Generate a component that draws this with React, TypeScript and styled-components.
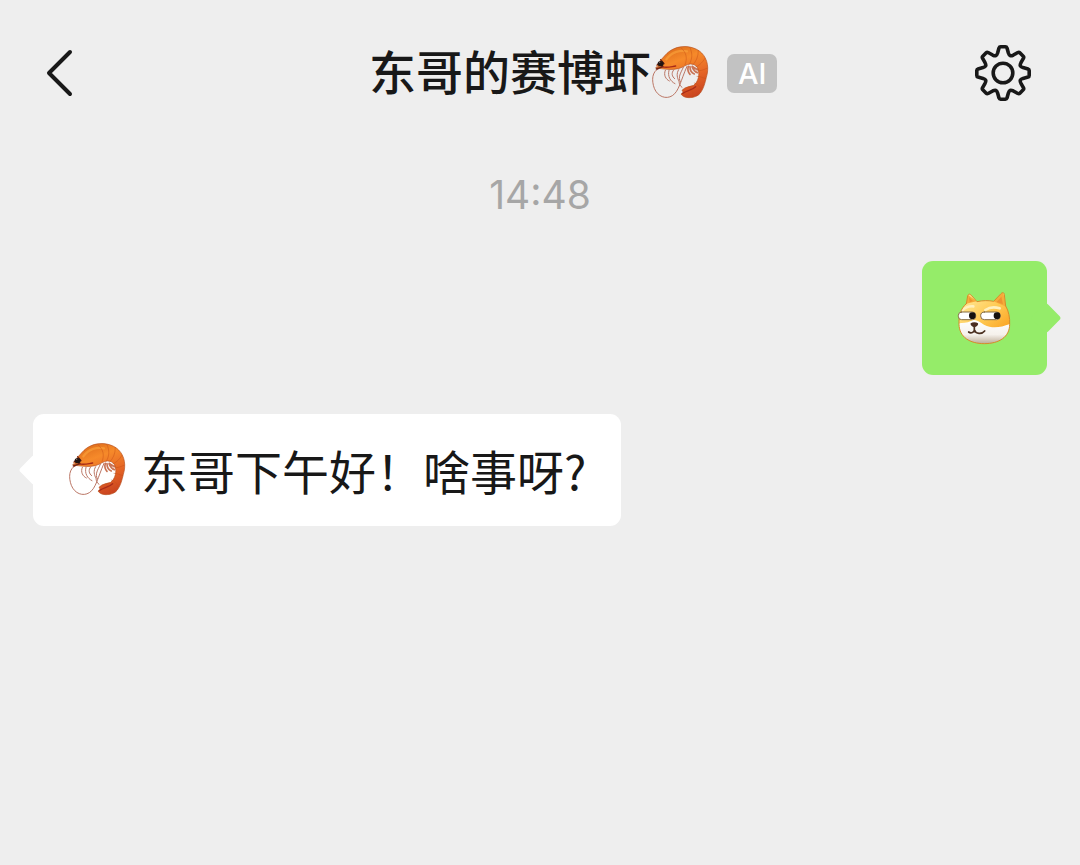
import React from "react";
import styled, { createGlobalStyle } from "styled-components";

const GlobalStyle = createGlobalStyle`
  * { box-sizing: border-box; }
  body {
    margin: 0;
    background: #eeeeee;
    color: #181818;
    font-family: Inter, "Noto Sans CJK SC", sans-serif;
  }
`;

const Page = styled.div`
  min-height: 100vh;
  background: #eeeeee;
`;

const Header = styled.header`
  display: grid;
  grid-template-columns: 1fr auto 1fr;
  align-items: center;
  height: 146px;
  padding: 0 48px 0 46px;
`;

const IconButton = styled.button`
  display: flex;
  padding: 0;
  border: 0;
  background: none;
  color: #181818;
  cursor: pointer;
`;

const Title = styled.h1`
  display: flex;
  align-items: center;
  margin: 0;
  font-size: 47px;
  line-height: 64px;
  font-weight: 500;
  white-space: nowrap;
`;

const HeaderEnd = styled.div`
  display: flex;
  align-items: center;
  justify-content: space-between;
  padding-left: 18px;
`;

const Badge = styled.span`
  padding: 0 11px;
  border-radius: 7px;
  background: #c2c2c2;
  color: #ffffff;
  font-size: 29px;
  line-height: 39px;
  font-weight: 500;
`;

const Conversation = styled.main`
  padding: 25px 33px;
`;

const Time = styled.time`
  display: block;
  margin-bottom: 42px;
  color: #a6a6a6;
  font-size: 39px;
  line-height: 48px;
  text-align: center;
`;

const MessageList = styled.ol`
  display: flex;
  flex-direction: column;
  gap: 39px;
  margin: 0;
  padding: 0;
  list-style: none;
`;

const Bubble = styled.li<{ $own?: boolean }>`
  position: relative;
  display: flex;
  align-items: center;
  gap: 15px;
  align-self: ${(p) => (p.$own ? "flex-end" : "flex-start")};
  min-height: ${(p) => (p.$own ? 114 : 112)}px;
  padding: 0 35px;
  border-radius: 11px;
  background: ${(p) => (p.$own ? "#95ec69" : "#ffffff")};
  font-family: "Noto Sans CJK SC", sans-serif;
  font-size: 47px;
  line-height: 64px;

  &::after {
    content: "";
    position: absolute;
    top: calc(50% - 11px);
    ${(p) => (p.$own ? "right" : "left")}: -10px;
    width: 22px;
    height: 22px;
    border-radius: 3px;
    background: inherit;
    transform: rotate(45deg);
  }
`;

const Drawing = styled.svg`
  display: block;
  flex: none;
`;

function BackIcon() {
  return (
    <Drawing width="28" height="50" viewBox="0 0 28 50" fill="none" aria-hidden="true">
      <path d="M24 4 3 25l21 21" stroke="currentColor" strokeWidth="4" strokeLinecap="round" strokeLinejoin="round" />
    </Drawing>
  );
}

// One tooth and the hollow that follows it, repeated every 45 degrees.
function gearPath() {
  const tooth = [[-5.4, -20], [-4, -25], [-3.6, -26.2], [-2.4, -26.2], [2.4, -26.2], [3.6, -26.2], [4, -25], [5.4, -20], [6.4, -17]];
  let d = "";
  for (let i = 0; i < 8; i++) {
    const a = (i * Math.PI) / 4;
    const p = tooth.map(([x, y]) =>
      `${(x * Math.cos(a) - y * Math.sin(a)).toFixed(2)} ${(x * Math.sin(a) + y * Math.cos(a)).toFixed(2)}`
    );
    const b = a + Math.PI / 4;
    const at = (x: number, y: number) =>
      `${(x * Math.cos(b) - y * Math.sin(b)).toFixed(2)} ${(x * Math.sin(b) + y * Math.cos(b)).toFixed(2)}`;
    d += `${i === 0 ? "M" : "L"}${p[0]}L${p[1]}Q${p[2]} ${p[3]}L${p[4]}Q${p[5]} ${p[6]}L${p[7]}C${p[8]} ${at(-6.4, -17)} ${at(-5.4, -20)}`;
  }
  return d + "Z";
}

function GearIcon() {
  return (
    <Drawing width="58" height="58" viewBox="-29 -29 58 58" fill="none" stroke="currentColor" strokeWidth="3.6" strokeLinejoin="round" aria-hidden="true">
      <path d={gearPath()} />
      <circle r="9.8" />
    </Drawing>
  );
}

function Shrimp({ id }: { id: string }) {
  return (
    <Drawing width="58" height="56" viewBox="15 15 174 168" fill="none" strokeLinecap="round" strokeLinejoin="round" role="img" aria-label="虾">
      <defs>
        <linearGradient id={id} x1="90" y1="20" x2="150" y2="175" gradientUnits="userSpaceOnUse">
          <stop offset="0" stopColor="#e0701d" />
          <stop offset=".25" stopColor="#f68a2a" />
          <stop offset=".6" stopColor="#e56526" />
          <stop offset="1" stopColor="#c7401f" />
        </linearGradient>
      </defs>
      <g stroke="#bb7665" strokeWidth="3">
        <path d="M38 86C18 94 16 121 25 145c10 25 35 34 54 22 20-13 25-45 44-88" />
        <path d="M58 91c-6 14 1 27 12 32M69 91c-5 18 4 33 18 40M83 90c-8 9-5 20 3 26M98 89c-8 12-4 27 1 34 0 9 4 16 9 19M112 82c-8 17-17 30-9 43" />
      </g>
      <g stroke="#c97354" strokeWidth="5">
        <path d="M127 79c-3 11 0 19 5 24M132 80c0 11 6 19 13 22M138 80c4 10 9 16 16 18M139 79c7 8 14 9 19 9" />
      </g>
      <path
        d="M32 77 46 69 42 62C53 53 61 37 82 27c29-14 67-7 85 12 19 19 22 48 14 73-4 17-8 34-18 47-7 10-21 14-34 14-11 0-20-4-24-11l7-5-4-6c9-10 22-11 35-15 12-9 17-27 15-40-1-14-9-24-25-24-11 0-20 10-36 14-21 5-43 1-60-1l-8-2 10-4Z"
        fill={`url(#${id})`}
        stroke="#b74f1d"
        strokeWidth="2"
      />
      <path d="M61 58c16-22 42-29 62-24" stroke="#ffae42" strokeWidth="7" opacity=".5" />
      <path d="M106 24c15 14 19 31 11 50M132 23c8 18 7 33-1 48M157 32c0 19-7 33-17 43M177 55c-10 16-20 23-30 27M184 84c-13 7-22 9-32 8M179 116c-9-3-17-7-26-7M165 147c-4-9-12-16-20-18M141 171c2-14-4-22-12-30" stroke="#c65016" strokeWidth="2" opacity=".7" />
      <path d="M46 80c17 5 29 0 43-2M110 160c15-9 27-9 39-20" stroke="#a92c18" strokeWidth="4" />
      <path d="m34 73 18-4M31 87l20-7M44 59l10 12" stroke="#702315" strokeWidth="4" />
      <ellipse cx="44" cy="71" rx="9" ry="8" fill="#201412" />
      <circle cx="41" cy="67" r="2" fill="#8a736b" />
    </Drawing>
  );
}

function Doge() {
  return (
    <Drawing width="55" height="55" viewBox="23 18 165 165" fill="none" strokeLinecap="round" strokeLinejoin="round" role="img" aria-label="狗头">
      <defs>
        <linearGradient id="fur" x1="70" y1="50" x2="150" y2="140" gradientUnits="userSpaceOnUse">
          <stop offset="0" stopColor="#ffdf82" />
          <stop offset=".45" stopColor="#ffcb55" />
          <stop offset="1" stopColor="#fba92a" />
        </linearGradient>
        <linearGradient id="muzzle" x1="90" y1="105" x2="90" y2="178" gradientUnits="userSpaceOnUse">
          <stop offset="0" stopColor="#ffffff" />
          <stop offset=".6" stopColor="#f5f1ec" />
          <stop offset="1" stopColor="#b9a792" />
        </linearGradient>
        <clipPath id="face">
          <path d="M51 56 55 33c2-7 6-7 11-2l17 19c16-4 36-4 50-1l22-23c5-5 9-4 10 3l4 34c9 14 13 36 12 55 0 38-32 58-76 58-44 0-75-20-76-58-1-25 4-47 22-62Z" />
        </clipPath>
      </defs>
      <g clipPath="url(#face)">
        <path d="M20 15h170v170H20z" fill="url(#fur)" />
        <path d="M23 116c16-3 28-1 42-8 14-8 25 4 39 11 27 13 49 8 80-3v70H23Z" fill="url(#muzzle)" />
        <path d="m51 26-1 30 32-7ZM160 20l-28 29 40 17Z" fill="#f6ac3a" />
        <path d="m59 37 2 15 10-4ZM156 35l-14 16 19 7Z" fill="#ee9330" />
        <path d="M38 77c10-11 20-14 34-13M108 75c13-9 28-10 43-5" stroke="#fff0bd" strokeWidth="8" />
      </g>
      <path d="M51 56 55 33c2-7 6-7 11-2l17 19c16-4 36-4 50-1l22-23c5-5 9-4 10 3l4 34c9 14 13 36 12 55 0 38-32 58-76 58-44 0-75-20-76-58-1-25 4-47 22-62Z" stroke="#d58c2c" strokeWidth="3" />
      <rect x="27" y="81" width="52" height="23" rx="10" fill="#fff" stroke="#846c44" strokeWidth="3" />
      <rect x="94" y="81" width="59" height="23" rx="11" fill="#fff" stroke="#846c44" strokeWidth="3" />
      <circle cx="69" cy="92" r="10" fill="#15110e" />
      <circle cx="143" cy="92" r="10" fill="#15110e" />
      <path d="M64 115c6-4 16-4 22 0 2 5-5 11-11 12-6-1-13-7-11-12Z" fill="#4b2d22" />
      <path d="M75 124v10c0 8-10 13-17 7M75 134c4 14 23 14 31 4" stroke="#4b3021" strokeWidth="5" />
    </Drawing>
  );
}

export default function App() {
  return (
    <Page>
      <GlobalStyle />
      <Header>
        <IconButton type="button" aria-label="返回">
          <BackIcon />
        </IconButton>
        <Title>
          东哥的赛博虾
          <Shrimp id="title-shrimp" />
        </Title>
        <HeaderEnd>
          <Badge>AI</Badge>
          <IconButton type="button" aria-label="设置">
            <GearIcon />
          </IconButton>
        </HeaderEnd>
      </Header>
      <Conversation>
        <Time dateTime="14:48">14:48</Time>
        <MessageList>
          <Bubble $own>
            <Doge />
          </Bubble>
          <Bubble>
            <Shrimp id="message-shrimp" />
            <span>东哥下午好！啥事呀?</span>
          </Bubble>
        </MessageList>
      </Conversation>
    </Page>
  );
}
